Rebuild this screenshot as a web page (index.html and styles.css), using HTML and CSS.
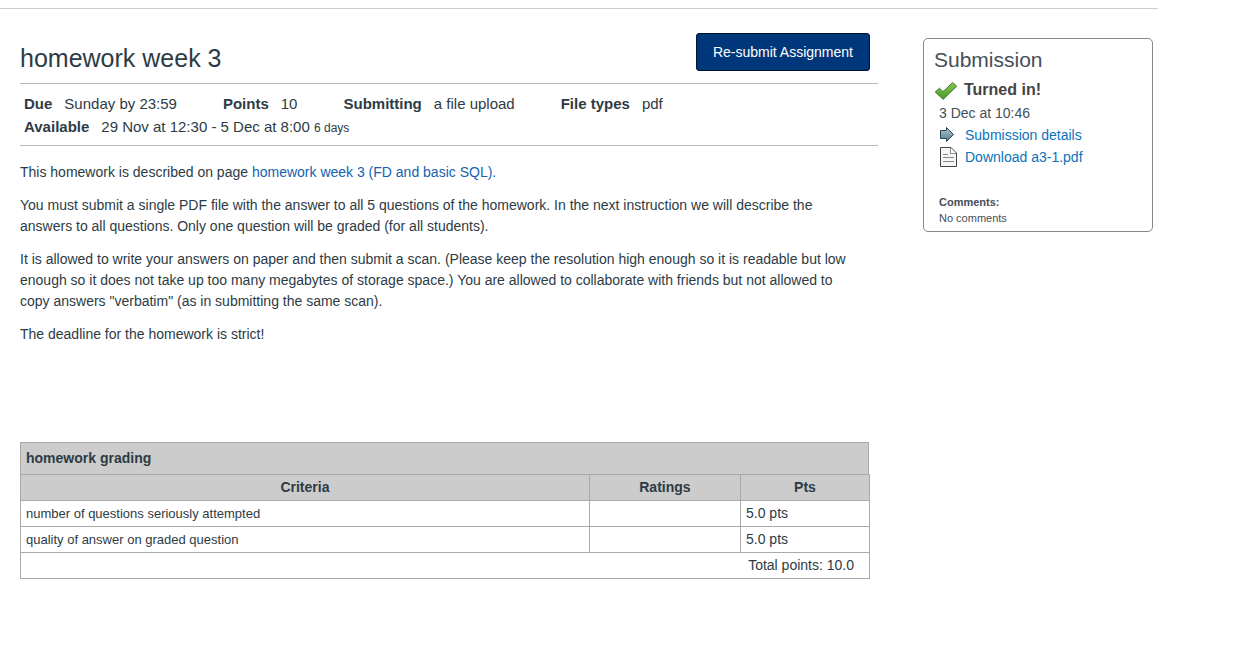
FILE: index.html
```html
<!DOCTYPE html>
<html lang="en">
<head>
<meta charset="utf-8">
<title>homework week 3</title>
<link rel="stylesheet" href="styles.css">
</head>
<body>
<div class="page">
  <main class="content">
    <header class="assignment-header">
      <h1 class="title">homework week 3</h1>
      <button class="submit-button" type="button">Re-submit Assignment</button>
    </header>
    <ul class="details">
      <li class="detail"><span class="label">Due</span><span class="value">Sunday by 23:59</span></li>
      <li class="detail"><span class="label">Points</span><span class="value">10</span></li>
      <li class="detail"><span class="label">Submitting</span><span class="value">a file upload</span></li>
      <li class="detail"><span class="label">File types</span><span class="value">pdf</span></li>
      <li class="detail detail-wide"><span class="label">Available</span><span class="value">29 Nov at 12:30 - 5 Dec at 8:00 <small class="duration">6 days</small></span></li>
    </ul>
    <div class="description">
      <p>This homework is described on page <a class="link-dark" href="#">homework week 3 (FD and basic SQL).</a></p>
      <p>You must submit a single PDF file with the answer to all 5 questions of the homework. In the next instruction we will describe the answers to all questions. Only one question will be graded (for all students).</p>
      <p>It is allowed to write your answers on paper and then submit a scan. (Please keep the resolution high enough so it is readable but low enough so it does not take up too many megabytes of storage space.) You are allowed to collaborate with friends but not allowed to copy answers "verbatim" (as in submitting the same scan).</p>
      <p>The deadline for the homework is strict!</p>
    </div>
    <table class="rubric">
      <caption>homework grading</caption>
      <colgroup><col class="col-criteria"><col class="col-ratings"><col class="col-points"></colgroup>
      <thead>
        <tr><th scope="col">Criteria</th><th scope="col">Ratings</th><th scope="col">Pts</th></tr>
      </thead>
      <tbody>
        <tr><td class="criterion">number of questions seriously attempted</td><td></td><td>5.0 pts</td></tr>
        <tr><td class="criterion">quality of answer on graded question</td><td></td><td>5.0 pts</td></tr>
      </tbody>
      <tfoot>
        <tr><td class="total" colspan="3">Total points: 10.0</td></tr>
      </tfoot>
    </table>
  </main>
  <aside class="submission">
    <h2 class="submission-title">Submission</h2>
    <div class="status">
      <svg class="check" viewBox="0 0 24 20" width="24" height="20" aria-hidden="true">
        <defs><linearGradient id="green" x1="0" y1="0" x2="0" y2="1"><stop offset="0" stop-color="#83c653"/><stop offset="1" stop-color="#4b9a28"/></linearGradient></defs>
        <path d="M1.2 12 L5.5 8.2 L9 11.6 L18.7 2.5 L22.7 6.2 L9.2 19.4 Z" fill="url(#green)" stroke="#4a7a34" stroke-linejoin="round"/>
      </svg>
      <strong class="status-text">Turned in!</strong>
    </div>
    <p class="date">3 Dec at 10:46</p>
    <a class="action" href="#">
      <svg class="icon" viewBox="0 0 18 20" width="18" height="20" aria-hidden="true">
        <defs><linearGradient id="steel" x1="0" y1="0" x2="0" y2="1"><stop offset="0" stop-color="#b4cad4"/><stop offset="1" stop-color="#54788a"/></linearGradient></defs>
        <path d="M1.5 5.5 H7.5 V2.5 L14.5 9.5 L7.5 16.5 V13.5 H1.5 Z" fill="url(#steel)" stroke="#2c4653"/>
      </svg>
      <span>Submission details</span>
    </a>
    <a class="action" href="#">
      <svg class="icon" viewBox="0 0 18 20" width="18" height="20" aria-hidden="true">
        <path d="M1.5 .5 H12 L17.5 6 V19.5 H1.5 Z" fill="#f6f6f6" stroke="#444"/>
        <path d="M11.5 1 V6.5 H17" fill="#fff" stroke="#888"/>
        <path d="M4 7.5 H9 M4 10.5 H15 M4 14.5 H15" fill="none" stroke="#888"/>
      </svg>
      <span>Download a3-1.pdf</span>
    </a>
    <h3 class="comments-title">Comments:</h3>
    <p class="comments">No comments</p>
  </aside>
</div>
</body>
</html>
```
FILE: styles.css
```css
* {
  box-sizing: border-box;
}

body {
  margin: 0;
  background: #fff;
  color: #2d3b45;
  font: 14px/21px "Liberation Sans", Arial, sans-serif;
}

.page {
  display: flex;
  align-items: flex-start;
  gap: 45px;
  margin: 8px 91px 0 0;
  padding: 24px 5px 24px 20px;
  border-top: 1px solid #c7cdd1;
}

.content {
  flex: 1;
  min-width: 0;
}

.assignment-header {
  display: flex;
  align-items: center;
  justify-content: space-between;
  padding: 0 8px 12px 0;
}

.title {
  margin: 12px 0 0;
  font-size: 25px;
  font-weight: 400;
  line-height: 26px;
}

.submit-button {
  height: 38px;
  padding: 0 16px;
  border: 1px solid #00142d;
  border-radius: 3px;
  background: #00377a;
  color: #fff;
  font: 14px/20px "Liberation Sans", Arial, sans-serif;
  cursor: pointer;
}

.details {
  display: flex;
  flex-wrap: wrap;
  column-gap: 46px;
  margin: 0;
  padding: 8px 4px 7px;
  border: solid #b7babc;
  border-width: 1px 0;
  font-size: 15px;
  line-height: 23px;
  list-style: none;
}

.detail {
  display: flex;
  gap: 12px;
}

.detail-wide {
  flex-basis: 100%;
}

.label {
  font-weight: 700;
}

.duration {
  font-size: 12px;
  line-height: 12px;
}

.description {
  margin-top: 16px;
  padding-right: 16px;
}

.description p {
  margin: 0 0 12px;
}

a {
  color: #0a73bb;
  text-decoration: none;
}

.link-dark {
  color: #1462b0;
}

.rubric {
  width: calc(100% - 8px);
  margin-top: 97px;
  border-collapse: collapse;
  table-layout: fixed;
}

.rubric caption {
  margin-right: 1px;
  padding: 5px;
  border: 1px solid #a9a9a9;
  border-bottom: 0;
  background: #ccc;
  font-weight: 700;
  text-align: left;
}

.col-criteria {
  width: 67%;
}

.col-points {
  width: 129px;
}

.rubric th,
.rubric td {
  height: 26px;
  padding: 2px 5px;
  border: 1px solid #a9a9a9;
  text-align: left;
}

.rubric th {
  background: #ccc;
  text-align: center;
}

.rubric .criterion {
  font-size: 13px;
}

.rubric .total {
  padding-right: 15px;
  text-align: right;
}

.submission {
  width: 230px;
  margin-top: 5px;
  padding: 8px 10px 5px;
  border: 1px solid #888;
  border-radius: 5px;
  color: #444f57;
}

.submission-title {
  margin: 0 0 5px;
  font-size: 21px;
  font-weight: 400;
  line-height: 26px;
}

.status {
  display: flex;
  align-items: center;
  gap: 6px;
}

.status-text {
  color: #444;
  font-size: 16px;
  line-height: 24px;
}

.date {
  margin: 1px 0 0 5px;
}

.action {
  display: flex;
  align-items: center;
  gap: 8px;
  margin-left: 5px;
  line-height: 22px;
}

.comments-title {
  margin: 26px 0 0 5px;
  font-size: 11px;
  line-height: 16px;
}

.comments {
  margin: 0 0 0 5px;
  font-size: 11px;
  line-height: 16px;
}
```
